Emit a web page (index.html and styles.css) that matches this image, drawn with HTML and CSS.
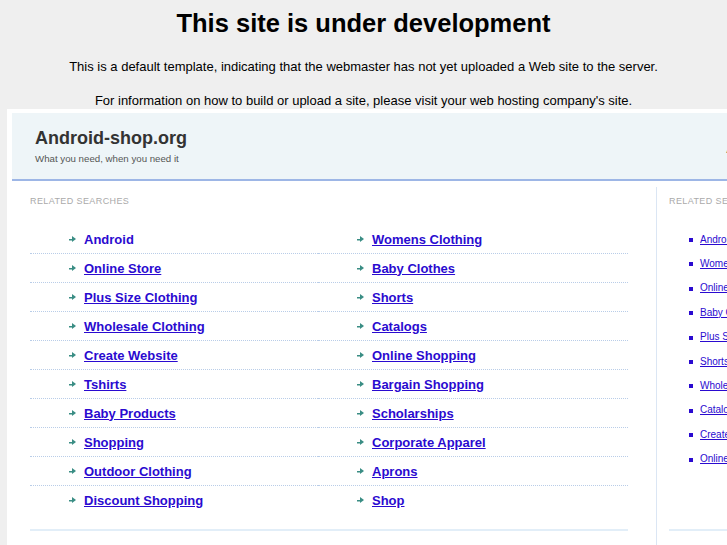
FILE: index.html
```html
<!DOCTYPE html>
<html lang="en">
<head>
    <meta charset="UTF-8">
    <title>This site is under development</title>
    <link rel="stylesheet" href="styles.css">
</head>
<body>
<h1>This site is under development</h1>
<p>This is a default template, indicating that the webmaster has not yet uploaded a Web site to the server.</p>
<p>For information on how to build or upload a site, please visit your web hosting company's site.</p>

<div class="frame">
    <div class="header">
        <div class="site">Android-shop.org</div>
        <div class="tagline">What you need, when you need it</div>
        <div class="edge">A</div>
    </div>
    <div class="content">
        <div class="main">
            <h2>Related Searches</h2>
            <ul class="links">
                <li><span class="arrow"></span><a href="#" class="hover">Android</a></li>
                <li><span class="arrow"></span><a href="#">Womens Clothing</a></li>
                <li><span class="arrow"></span><a href="#">Online Store</a></li>
                <li><span class="arrow"></span><a href="#">Baby Clothes</a></li>
                <li><span class="arrow"></span><a href="#">Plus Size Clothing</a></li>
                <li><span class="arrow"></span><a href="#">Shorts</a></li>
                <li><span class="arrow"></span><a href="#">Wholesale Clothing</a></li>
                <li><span class="arrow"></span><a href="#">Catalogs</a></li>
                <li><span class="arrow"></span><a href="#">Create Website</a></li>
                <li><span class="arrow"></span><a href="#">Online Shopping</a></li>
                <li><span class="arrow"></span><a href="#">Tshirts</a></li>
                <li><span class="arrow"></span><a href="#">Bargain Shopping</a></li>
                <li><span class="arrow"></span><a href="#">Baby Products</a></li>
                <li><span class="arrow"></span><a href="#">Scholarships</a></li>
                <li><span class="arrow"></span><a href="#">Shopping</a></li>
                <li><span class="arrow"></span><a href="#">Corporate Apparel</a></li>
                <li><span class="arrow"></span><a href="#">Outdoor Clothing</a></li>
                <li><span class="arrow"></span><a href="#">Aprons</a></li>
                <li><span class="arrow"></span><a href="#">Discount Shopping</a></li>
                <li><span class="arrow"></span><a href="#">Shop</a></li>
            </ul>
        </div>
        <div class="side">
            <h2>Related Searches</h2>
            <ul class="small-links">
                <li><a href="#">Android</a></li>
                <li><a href="#">Womens Clothing</a></li>
                <li><a href="#">Online Store</a></li>
                <li><a href="#">Baby Clothes</a></li>
                <li><a href="#">Plus Size Clothing</a></li>
                <li><a href="#">Shorts</a></li>
                <li><a href="#">Wholesale Clothing</a></li>
                <li><a href="#">Catalogs</a></li>
                <li><a href="#">Create Website</a></li>
                <li><a href="#">Online Shopping</a></li>
            </ul>
        </div>
    </div>
</div>
</body>
</html>
```

FILE: styles.css
```css
html, body {
    overflow: hidden;
}
body {
    margin: 0;
    background: #efefef;
    font-family: "Liberation Sans", Arial, sans-serif;
    color: #000;
}
h1 {
    font-size: 25.5px;
    text-align: center;
    margin: 9px 0 0;
    line-height: 28px;
}
p {
    font-size: 13px;
    text-align: center;
    margin: 22px 0 0;
    line-height: 15px;
}
p + p {
    margin-top: 19px;
}
.frame {
    margin: 1px 0 0 7px;
    width: 900px;
    height: 500px;
    background: #fff;
    padding: 4px 0 0 5px;
}
.header {
    position: relative;
    height: 66px;
    background: #eef5f8;
    border-bottom: 2px solid #9db6e6;
    padding-left: 23px;
}
.site {
    padding-top: 14px;
    font-size: 18px;
    font-weight: bold;
    color: #333;
    line-height: 22px;
}
.tagline {
    font-size: 9.7px;
    color: #555;
    margin-top: 4px;
}
.edge {
    position: absolute;
    left: 714px;
    top: 24px;
    font-size: 18px;
    font-weight: bold;
    color: #333;
}
.content {
    display: flex;
    margin-top: 6px;
}
.main {
    margin-left: 18px;
    width: 598px;
    padding-top: 9px;
    height: 333px;
    border-bottom: 2px solid #e2eef8;
}
h2 {
    margin: 0;
    font-size: 9px;
    font-weight: normal;
    color: #aaa;
    text-transform: uppercase;
    letter-spacing: .4px;
    line-height: 11px;
}
.links {
    list-style: none;
    margin: 18px 0 0;
    padding: 0;
    display: grid;
    grid-template-columns: 288px 310px;
}
.links li {
    height: 28px;
    padding-left: 39px;
    display: flex;
    align-items: center;
    border-bottom: 1px dotted #b9cde8;
    font-size: 13px;
    font-weight: bold;
}
.links li:nth-last-child(-n+2) {
    border-bottom: none;
}
.links a {
    color: #2a0ad0;
}
.links a.hover {
    text-decoration: none;
}
.arrow {
    width: 7px;
    height: 7px;
    margin-right: 8px;
    background:
        linear-gradient(#3a8d84, #3a8d84) 0 3px / 4px 1.5px no-repeat;
    position: relative;
}
.arrow::after {
    content: "";
    position: absolute;
    left: 3px;
    top: 0;
    border-left: 4px solid #3a8d84;
    border-top: 3.5px solid transparent;
    border-bottom: 3.5px solid transparent;
}
.side {
    margin-left: 28px;
    border-left: 1px solid #dbe6f4;
    padding: 9px 0 0 12px;
    width: 300px;
    height: 400px;
}
.side h2 {
    width: 100px;
}
.small-links {
    margin: 20px 0 0;
    padding: 0 0 58px 31px;
    list-style: none;
    font-size: 10px;
    border-bottom: 2px solid #e2eef8;
    width: 200px;
}
.small-links li {
    height: 24.4px;
    display: flex;
    align-items: center;
    position: relative;
}
.small-links li::before {
    content: "";
    position: absolute;
    left: -11px;
    top: 11px;
    width: 4px;
    height: 4px;
    background: #2a0ad0;
}
.small-links a {
    color: #2a0ad0;
}
```
